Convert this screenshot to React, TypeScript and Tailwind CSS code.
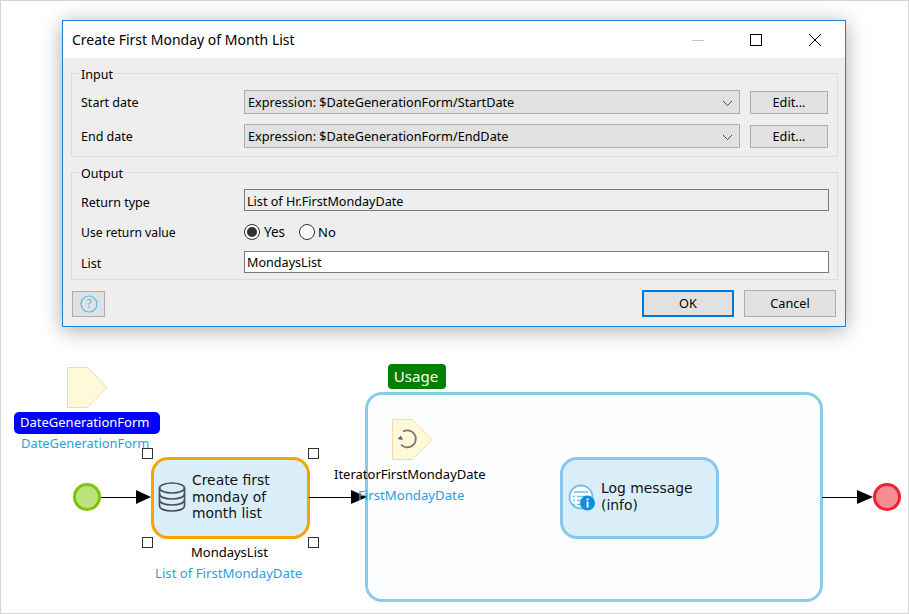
import React from "react";

const ui = { fontFamily: '"Noto Sans", "Open Sans", sans-serif' };

function Chevron() {
  return (
    <svg width="11" height="7" viewBox="0 0 11 7" className="absolute right-[6px] top-[9px]">
      <path d="M1 1 L5.5 5.5 L10 1" fill="none" stroke="#4a4a4a" strokeWidth="1" />
    </svg>
  );
}

function SelectRow({ label, value }: { label: string; value: string }) {
  return (
    <div className="flex items-center h-[24px]">
      <div className="w-[163px] text-[12.5px] leading-[18px] pt-[1px]">{label}</div>
      <div className="relative w-[496px] h-[24px] bg-[#e1e1e1] border border-[#adadad] pl-[3px] text-[12.7px] leading-[22.5px] whitespace-nowrap">
        {value}
        <Chevron />
      </div>
      <div className="ml-[10px] w-[78px] h-[23px] mt-px bg-[#e1e1e1] border border-[#adadad] text-center text-[12.7px] leading-[21px]">
        Edit...
      </div>
    </div>
  );
}

function Dialog() {
  return (
    <div
      className="absolute left-[62px] top-[20px] w-[784px] h-[307px] flex flex-col bg-[#eeeeee] border border-[#1c80d4] shadow-[0_3px_20px_rgba(0,0,0,0.34)] text-black"
      style={ui}
    >
      <div className="h-[37px] shrink-0 bg-white flex items-center pl-[9px] relative">
        <span className="text-[14px] leading-[20px]">Create First Monday of Month List</span>
        <div className="ml-auto flex items-center">
          <svg width="14" height="12" viewBox="0 0 14 12" className="mr-[44px]"><path d="M1 6.5H13" stroke="#c4c4c4" /></svg>
          <svg width="14" height="14" viewBox="0 0 14 14" className="mr-[45px]"><rect x="1.5" y="1.5" width="11" height="11" fill="none" stroke="#000" /></svg>
          <svg width="14" height="14" viewBox="0 0 14 14" className="mr-[23px]"><path d="M1 1L13 13M13 1L1 13" stroke="#000" strokeWidth="1" /></svg>
        </div>
      </div>
      <div className="flex-1 px-[8px] pt-[7px] flex flex-col">
        <fieldset className="w-[767px] border border-[#dcdcdc] pl-[9px] pt-[9px] pb-[8px]">
          <legend className="ml-[-1px] px-px text-[12.5px] leading-[16px]"><span className="block translate-y-[2px]">Input</span></legend>
          <div className="flex flex-col gap-[10px]">
            <SelectRow label="Start date" value="Expression: $DateGenerationForm/StartDate" />
            <SelectRow label="End date" value="Expression: $DateGenerationForm/EndDate" />
          </div>
        </fieldset>
        <fieldset className="mt-[7px] w-[767px] border border-[#dcdcdc] pl-[9px] pt-[9px] pb-[6px]">
          <legend className="ml-[-1px] px-px text-[12.5px] leading-[16px]"><span className="block translate-y-[2px]">Output</span></legend>
          <div className="flex items-center h-[22px]">
            <div className="w-[163px] text-[12.5px] leading-[18px] pt-[6px]">Return type</div>
            <div className="w-[585px] h-[22px] border border-[#7a7a7a] pl-[2px] text-[12.6px] leading-[23px]">List of Hr.FirstMondayDate</div>
          </div>
          <div className="flex items-center h-[40px]">
            <div className="w-[163px] text-[12.2px] leading-[18px] pt-[4px]">Use return value</div>
            <div className="flex items-center text-[12.5px] leading-[16px] mt-[1px]">
              <span className="w-[16px] h-[16px] rounded-full border border-[#333] bg-white flex items-center justify-center">
                <span className="w-[10px] h-[10px] rounded-full bg-[#333]" />
              </span>
              <span className="ml-[4px] w-[24px] text-[13.5px]">Yes</span>
              <span className="ml-[11px] w-[16px] h-[16px] rounded-full border border-[#333] bg-white" />
              <span className="ml-[3px] text-[13px]">No</span>
            </div>
          </div>
          <div className="flex items-center h-[22px]">
            <div className="w-[163px] text-[12.5px] leading-[18px] pt-[4px]">List</div>
            <div className="w-[585px] h-[22px] border border-[#7a7a7a] bg-white pl-[2px] text-[12.6px] leading-[21px]">MondaysList</div>
          </div>
        </fieldset>
        <div className="flex items-start pt-[10px]">
          <div className="ml-px w-[33px] h-[26px] mt-px bg-[#e1e1e1] border border-[#adadad] flex items-center justify-center">
            <svg width="18" height="18" viewBox="0 0 18 18">
              <circle cx="9" cy="9" r="8" fill="none" stroke="#4db5f5" strokeWidth="1.2" />
              <text x="9" y="13" textAnchor="middle" fontSize="12" fill="#4db5f5" style={ui}>?</text>
            </svg>
          </div>
          <div className="ml-auto w-[92px] h-[27px] bg-[#e1e1e1] border-2 border-[#0078d7] text-center text-[12.7px] leading-[23px]">OK</div>
          <div className="ml-[10px] w-[92px] h-[27px] mr-px bg-[#e1e1e1] border border-[#adadad] text-center text-[12.7px] leading-[25px]">Cancel</div>
        </div>
      </div>
    </div>
  );
}

function Pentagon({ className, children }: { className: string; children?: React.ReactNode }) {
  return (
    <svg width="41" height="41" viewBox="0 0 41 41" className={className}>
      <path d="M0.5 0.5H20.5L40 20.5L20.5 40.5H0.5Z" fill="#fff9da" stroke="#fbd9a5" />
      {children}
    </svg>
  );
}

function Handle({ className }: { className: string }) {
  return <div className={`absolute w-[11px] h-[11px] bg-white border border-[#333] ${className}`} />;
}

function Label({ className, children }: { className: string; children: React.ReactNode }) {
  return (
    <div className={`absolute leading-[18px] whitespace-nowrap ${className}`} style={ui}>
      {children}
    </div>
  );
}

function Arrow({ x, w = 15 }: { x: number; w?: number }) {
  return <path d={`M${x} 490L${x + w} 497L${x} 504Z`} fill="#000" />;
}

export default function App() {
  return (
    <div className="relative w-[909px] h-[614px] bg-white overflow-hidden border border-[#d4d4d4]">
      {/* free canvas: coordinates offset by the 1px frame */}
      <div className="absolute -left-px -top-px w-[909px] h-[614px]">
        <Pentagon className="absolute left-[67px] top-[367px]" />
        <div className="absolute left-[14px] top-[412px] w-[146px] h-[22px] rounded-[5px] bg-[#0000ff] text-white text-[13px] leading-[21px] pl-[6px]" style={ui}>
          DateGenerationForm
        </div>
        <Label className="left-[21px] top-[434px] text-[#2a9fe0] text-[12.9px]">DateGenerationForm</Label>

        {/* Loop */}
        <div className="absolute left-[365px] top-[392px] w-[458px] h-[210px] rounded-[17px] border-[3px] border-[#87cde8] bg-[#fbfdff]" />
        <div className="absolute left-[388px] top-[364px] w-[58px] h-[25px] rounded-[4px] bg-[#008000] text-white text-center text-[15px] leading-[24px] pr-[2px]" style={ui}>
          Usage
        </div>
        <Pentagon className="absolute left-[392px] top-[419px]">
          <path d="M11 12.500 A8.500 8.500 0 1 1 9 25.500" fill="none" stroke="#777" strokeWidth="1.800" />
          <path d="M5.500 20L9 16.500L11 21Z" fill="#666" />
        </Pentagon>
        <Label className="left-[334px] top-[465px] text-black text-[13px]">IteratorFirstMondayDate</Label>

        {/* Activity */}
        <div className="absolute left-[151px] top-[457px] w-[159px] h-[82px] rounded-[17px] border-[3px] border-[#f5a300] bg-[#daeefa]">
          <div className="ml-[38px] mt-[12px] text-[13.9px] leading-[16.5px] text-[#111] whitespace-nowrap" style={{ fontFamily: '"DejaVu Sans", sans-serif' }}>
            Create first<br />monday of<br />month list
          </div>
        </div>
        <svg width="32" height="34" viewBox="0 0 32 34" className="absolute left-[156px] top-[480px]">
          <g fill="none" stroke="#4a4f55" strokeWidth="1.700">
            <ellipse cx="16" cy="8" rx="12.500" ry="5" />
            <path d="M3.500 8V26C3.500 29 9 31 16 31S28.500 29 28.500 26V8" />
            <path d="M3.500 14C3.500 17 9 19 16 19S28.500 17 28.500 14" />
            <path d="M3.500 20C3.500 23 9 25 16 25S28.500 23 28.500 20" />
          </g>
        </svg>
        <Label className="left-[191px] top-[543px] text-black text-[13px]">MondaysList</Label>
        <Label className="left-[155px] top-[564px] text-[#2a9fe0] text-[13.2px]">List of FirstMondayDate</Label>

        {/* Log */}
        <div className="absolute left-[560px] top-[457px] w-[159px] h-[82px] rounded-[17px] border-[3px] border-[#85c8ec] bg-[#daeefa]">
          <div className="ml-[38px] mt-[20px] text-[13.9px] leading-[17px] text-[#111] whitespace-nowrap" style={{ fontFamily: '"DejaVu Sans", sans-serif' }}>
            Log message<br />(info)
          </div>
        </div>
        <svg width="28" height="28" viewBox="0 0 28 28" className="absolute left-[568px] top-[484px]">
          <circle cx="13" cy="13" r="11.500" fill="#fff" stroke="#6fc0f0" strokeWidth="1.800" />
          <g stroke="#6fc0f0" strokeWidth="1.500">
            <path d="M6 8H20M9 12.500H18M9 16.500H14M9 20.500H14" />
            <path d="M5 12.500H7M5 16.500H7M5 20.500H7" />
          </g>
          <circle cx="19.500" cy="19" r="7.500" fill="#0e8fdc" />
          <rect x="18.600" y="17.500" width="1.900" height="6" fill="#fff" />
          <rect x="18.600" y="14.500" width="1.900" height="1.900" fill="#fff" />
        </svg>

        {/* Flow lines and events */}
        <svg width="909" height="614" viewBox="0 0 909 614" className="absolute left-0 top-0 pointer-events-none">
          <path d="M101 497H140M309 497H356M822 497H861" stroke="#000" strokeWidth="1" fill="none" shapeRendering="crispEdges" />
          <Arrow x={136} />
          <Arrow x={351} w={16} />
          <Arrow x={857} w={16} />
          <circle cx="87" cy="497" r="12.500" fill="#bde37f" stroke="#7fc400" strokeWidth="3" />
          <circle cx="887" cy="497" r="12.500" fill="#f78e93" stroke="#ee2233" strokeWidth="3" />
        </svg>

        <Label className="left-[358px] top-[486px] text-[#2a9fe0] text-[13.2px]">FirstMondayDate</Label>

        <Handle className="left-[142px] top-[448px]" />
        <Handle className="left-[308px] top-[448px]" />
        <Handle className="left-[142px] top-[537px]" />
        <Handle className="left-[308px] top-[537px]" />

        <Dialog />
      </div>
    </div>
  );
}
